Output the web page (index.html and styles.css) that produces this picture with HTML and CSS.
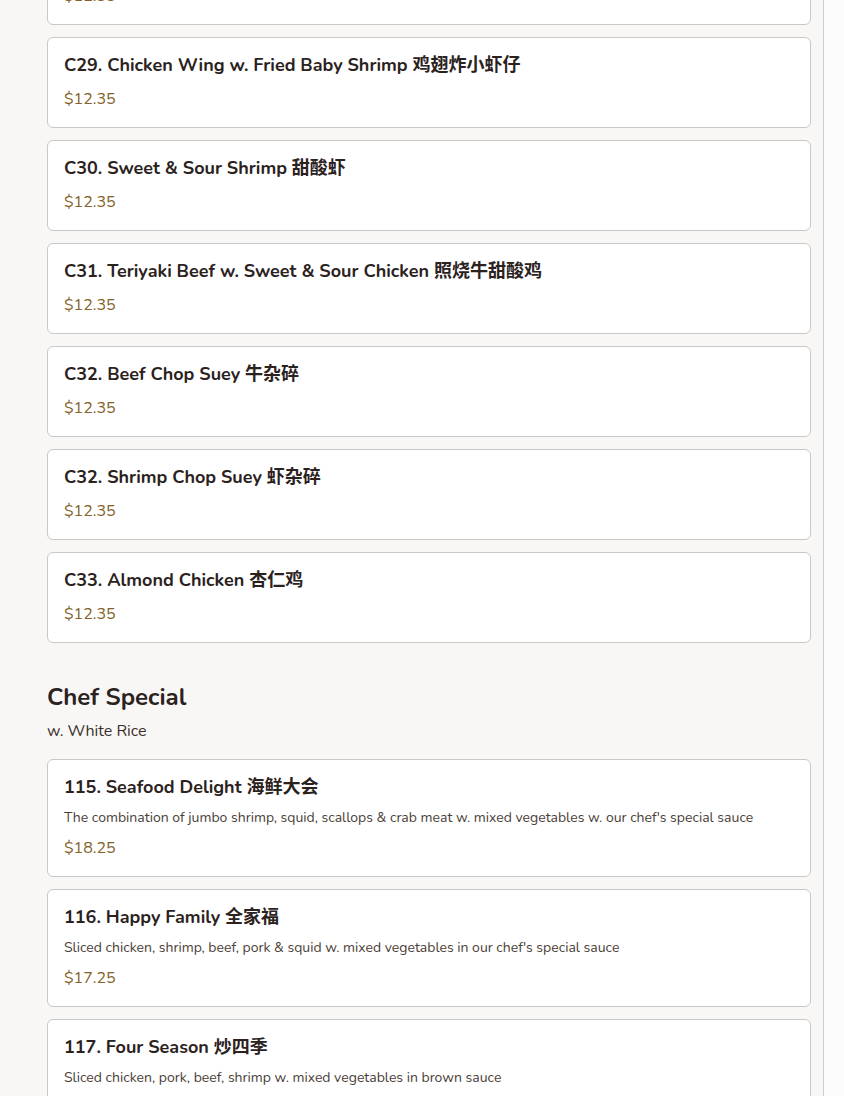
FILE: index.html
```html
<!DOCTYPE html>
<html lang="en">
<head>
<meta charset="utf-8">
<title>Menu</title>
<link rel="stylesheet" href="styles.css">
</head>
<body>
<div class="page">
  <main class="menu">
    <section class="section section-first">
      <div class="items">
        <article class="item">
          <h3 class="item-name">C28. Sesame Chicken 芝麻鸡</h3>
          <div class="item-price">$12.35</div>
        </article>
        <article class="item">
          <h3 class="item-name">C29. Chicken Wing w. Fried Baby Shrimp 鸡翅炸小虾仔</h3>
          <div class="item-price">$12.35</div>
        </article>
        <article class="item">
          <h3 class="item-name">C30. Sweet &amp; Sour Shrimp 甜酸虾</h3>
          <div class="item-price">$12.35</div>
        </article>
        <article class="item">
          <h3 class="item-name">C31. Teriyaki Beef w. Sweet &amp; Sour Chicken 照烧牛甜酸鸡</h3>
          <div class="item-price">$12.35</div>
        </article>
        <article class="item">
          <h3 class="item-name">C32. Beef Chop Suey 牛杂碎</h3>
          <div class="item-price">$12.35</div>
        </article>
        <article class="item">
          <h3 class="item-name">C32. Shrimp Chop Suey 虾杂碎</h3>
          <div class="item-price">$12.35</div>
        </article>
        <article class="item">
          <h3 class="item-name">C33. Almond Chicken 杏仁鸡</h3>
          <div class="item-price">$12.35</div>
        </article>
      </div>
    </section>

    <section class="section">
      <h2 class="section-title">Chef Special</h2>
      <p class="section-note">w. White Rice</p>
      <div class="items">
        <article class="item">
          <h3 class="item-name">115. Seafood Delight 海鲜大会</h3>
          <p class="item-desc">The combination of jumbo shrimp, squid, scallops &amp; crab meat w. mixed vegetables w. our chef's special sauce</p>
          <div class="item-price">$18.25</div>
        </article>
        <article class="item">
          <h3 class="item-name">116. Happy Family 全家福</h3>
          <p class="item-desc">Sliced chicken, shrimp, beef, pork &amp; squid w. mixed vegetables in our chef's special sauce</p>
          <div class="item-price">$17.25</div>
        </article>
        <article class="item">
          <h3 class="item-name">117. Four Season 炒四季</h3>
          <p class="item-desc">Sliced chicken, pork, beef, shrimp w. mixed vegetables in brown sauce</p>
          <div class="item-price">$16.95</div>
        </article>
      </div>
    </section>
  </main>
</div>
</body>
</html>
```
FILE: styles.css
```css
* { box-sizing: border-box; }

html, body {
  margin: 0;
  padding: 0;
  background: #fcfcfc;
}

body {
  font-family: "Nunito", "Lato", "Noto Sans CJK SC", sans-serif;
  color: #2b221d;
  overflow: hidden;
}

.page {
  width: 824px;
  min-height: 1200px;
  background: #f9f7f5;
  border-right: 1px solid #d2d0ce;
  padding: 0 12px 0 47px;
}

.menu {
  margin-top: -66px;
}

.section + .section {
  margin-top: 38px;
}

.section-title {
  margin: 0;
  font-size: 24px;
  line-height: 32px;
  font-weight: 700;
  color: #2b221d;
}

.section-note {
  margin: 6px 0 16px;
  font-size: 16px;
  line-height: 24px;
  color: #3a302a;
}

.items {
  display: flex;
  flex-direction: column;
  gap: 12px;
}

.item {
  background: #ffffff;
  border: 1px solid #cac8c6;
  border-radius: 6px;
  padding: 16px;
}

.item-name {
  margin: 0 0 11px;
  font-size: 18px;
  line-height: 22px;
  font-weight: 700;
  color: #2b221d;
}

.item-desc {
  margin: -1px 0 8px;
  font-size: 14px;
  line-height: 20px;
  color: #4a3e37;
}

.item-price {
  font-size: 16px;
  line-height: 24px;
  color: #826229;
}
```
